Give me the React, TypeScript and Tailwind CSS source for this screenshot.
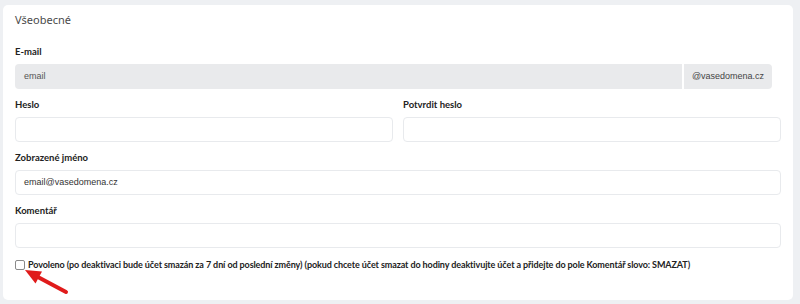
import React from "react";

const labelCls = "block text-[9.5px] font-bold text-[#222] leading-[12px] mb-[6px]";
const inputCls = "h-[25px] w-full rounded-[4px] border border-[#e8eaed] bg-white";

export default function App() {
  return (
    <div className="w-[800px] h-[304px] bg-[#eef0f3] pt-[5px] pl-[3px] pr-[7px] pb-[4px]" style={{ fontFamily: "Lato, 'Noto Sans', sans-serif" }}>
      <div className="relative h-[295px] rounded-[5px] bg-white px-[12px] pt-[8px]">
        <div className="text-[11px] leading-[14px] text-[#4a4a4a]" style={{ fontFamily: "'Noto Sans', sans-serif" }}>Všeobecné</div>

        <div className="mt-[19px]">
          <label className={labelCls}>E-mail</label>
          <div className="flex h-[25px] w-[757px] gap-[2px]" style={{ fontFamily: "'Liberation Sans', Arial, sans-serif" }}>
            <div className="flex flex-1 items-center rounded-l-[4px] bg-[#e9eaec] pl-[9px] text-[9px] text-[#555]">email</div>
            <div className="flex w-[88px] items-center justify-center rounded-r-[4px] bg-[#e9eaec] text-[9px] text-[#444]">@vasedomena.cz</div>
          </div>
        </div>

        <div className="mt-[10px] flex gap-[10px] w-[766px]">
          <div className="flex-1">
            <label className={labelCls}>Heslo</label>
            <div className={inputCls}></div>
          </div>
          <div className="flex-1">
            <label className={labelCls}>Potvrdit heslo</label>
            <div className={inputCls}></div>
          </div>
        </div>

        <div className="mt-[10px] w-[766px]">
          <label className={labelCls}>Zobrazené jméno</label>
          <div className={inputCls + " flex items-center pl-[8px] text-[9px] text-[#333]"} style={{ fontFamily: "'Liberation Sans', Arial, sans-serif" }}>email@vasedomena.cz</div>
        </div>

        <div className="mt-[10px] w-[766px]">
          <label className={labelCls}>Komentář</label>
          <div className={inputCls}></div>
        </div>

        <div className="mt-[11px] flex items-center gap-[3px]">
          <span className="inline-block h-[10px] w-[10px] rounded-[2px] border border-[#8a8a8a] bg-white"></span>
          <span className="text-[9px] font-bold leading-[12px] tracking-[-0.1px] text-[#222]">Povoleno (po deaktivaci bude účet smazán za 7 dní od poslední změny) (pokud chcete účet smazat do hodiny deaktivujte účet a přidejte do pole Komentář slovo: SMAZAT)</span>
        </div>

        <svg className="absolute left-[17px] top-[260px]" width="52" height="32" viewBox="0 0 52 32">
          <line x1="46" y1="27" x2="16" y2="11" stroke="#e01b1b" strokeWidth="4" strokeLinecap="round" />
          <polygon points="5,5 22,6.5 15.5,18.5" fill="#e01b1b" />
        </svg>
      </div>
    </div>
  );
}
